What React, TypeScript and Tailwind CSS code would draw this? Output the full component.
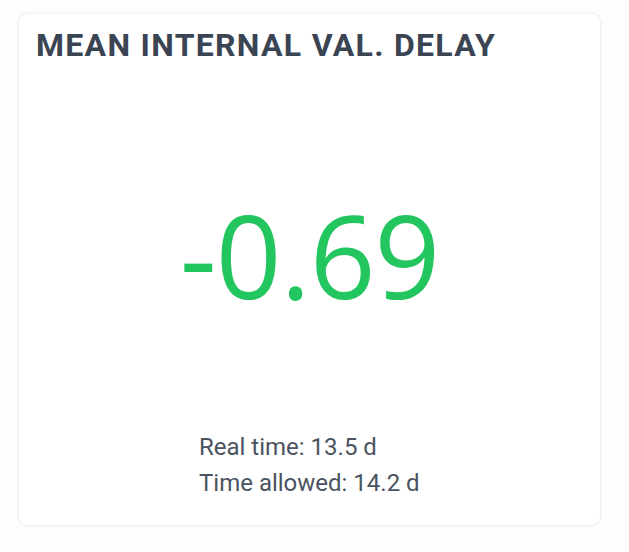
import React from "react";

export default function App() {
  return (
    <div className="w-[629px] h-[552px] bg-[#fdfdfd] pt-[13px] pl-[18px]" style={{ fontFamily: "Roboto, 'Liberation Sans', sans-serif" }}>
      <div className="w-[583px] h-[513px] bg-white rounded-[10px] border border-[#f0f0f0] shadow-[0_0_3px_rgba(0,0,0,0.06)] flex flex-col">
        <div className="pt-[11px] pl-[17px] text-[32px] font-bold text-[#3a4452] leading-[40px] tracking-[1.3px]">
          MEAN INTERNAL VAL. DELAY
        </div>
        <div className="flex justify-center mt-[140px]">
          <span className="text-[115px] leading-[100px] text-[#22c55e] tracking-[-1px]" style={{ fontFamily: "'Open Sans', 'Noto Sans', sans-serif" }}>
            -0.69
          </span>
        </div>
        <div className="mt-[124px] pl-[180px] text-[24px] text-[#4b5360] leading-[36px]">
          <div>Real time: 13.5 d</div>
          <div>Time allowed: 14.2 d</div>
        </div>
      </div>
    </div>
  );
}
